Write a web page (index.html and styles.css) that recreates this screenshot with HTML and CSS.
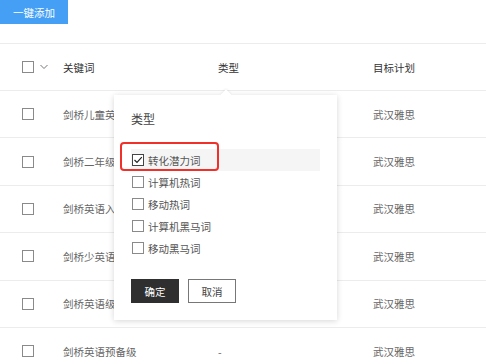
FILE: index.html
```html
<!DOCTYPE html>
<html lang="zh-CN">
<head>
  <meta charset="UTF-8" />
  <meta name="viewport" content="width=device-width, initial-scale=1.0"/>
  <title>关键词</title>
  <link rel="stylesheet" href="styles.css">
</head>
<body>

  <div class="toolbar">
    <button class="btn-add">一键添加</button>
  </div>

  <!-- Keyword table -->
  <div class="table">
    <div class="row head">
      <div class="cell check">
        <span class="box"></span>
        <svg class="caret" width="8" height="6" viewBox="0 0 8 6"><path d="M0.5 1 L4 4.5 L7.5 1" fill="none" stroke="#777" stroke-width="1"/></svg>
      </div>
      <div class="cell">关键词</div>
      <div class="cell">类型</div>
      <div class="cell">目标计划</div>
    </div>
    <div class="row">
      <div class="cell check"><span class="box"></span></div>
      <div class="cell">剑桥儿童英语</div>
      <div class="cell"></div>
      <div class="cell">武汉雅思</div>
    </div>
    <div class="row">
      <div class="cell check"><span class="box"></span></div>
      <div class="cell">剑桥二年级英语</div>
      <div class="cell"></div>
      <div class="cell">武汉雅思</div>
    </div>
    <div class="row">
      <div class="cell check"><span class="box"></span></div>
      <div class="cell">剑桥英语入门级</div>
      <div class="cell"></div>
      <div class="cell">武汉雅思</div>
    </div>
    <div class="row">
      <div class="cell check"><span class="box"></span></div>
      <div class="cell">剑桥少英语考级</div>
      <div class="cell"></div>
      <div class="cell">武汉雅思</div>
    </div>
    <div class="row">
      <div class="cell check"><span class="box"></span></div>
      <div class="cell">剑桥英语级别</div>
      <div class="cell"></div>
      <div class="cell">武汉雅思</div>
    </div>
    <div class="row">
      <div class="cell check"><span class="box"></span></div>
      <div class="cell">剑桥英语预备级</div>
      <div class="cell">-</div>
      <div class="cell">武汉雅思</div>
    </div>
  </div>

  <!-- Filter popover -->
  <div class="popover">
    <div class="popover-title">类型</div>
    <ul class="options">
      <li class="option active">
        <span class="box checked">
          <svg width="10" height="10" viewBox="0 0 10 10"><path d="M1.5 5 L4 7.5 L8.8 2.2" fill="none" stroke="#222" stroke-width="1.2"/></svg>
        </span>
        转化潜力词
      </li>
      <li class="option"><span class="box"></span>计算机热词</li>
      <li class="option"><span class="box"></span>移动热词</li>
      <li class="option"><span class="box"></span>计算机黑马词</li>
      <li class="option"><span class="box"></span>移动黑马词</li>
    </ul>
    <div class="actions">
      <button class="btn-ok">确定</button>
      <button class="btn-cancel">取消</button>
    </div>
  </div>

  <!-- annotation -->
  <div class="mark"></div>

</body>
</html>
```

FILE: styles.css
```css
* {
  box-sizing: border-box;
  margin: 0;
  padding: 0;
}

body {
  font-family: "Noto Sans CJK SC", "Noto Sans", sans-serif;
  font-size: 10.5px;
  color: #666;
  background: #fff;
  width: 486px;
  height: 364px;
  overflow: hidden;
  position: relative;
}

button {
  font-family: inherit;
  font-size: 10.5px;
  cursor: pointer;
}

.toolbar {
  height: 43px;
}

.btn-add {
  width: 68px;
  height: 24px;
  border: none;
  background: #449ff5;
  color: #fff;
}

/* Table */
.table {
  border-top: 1px solid #ececec;
}

.row {
  display: grid;
  grid-template-columns: 63px 155px 155px 1fr;
  align-items: center;
  height: 47.4px;
  border-bottom: 1px solid #ececec;
}

.row.head {
  height: 47px;
  color: #333;
}

.cell {
  white-space: nowrap;
  overflow: hidden;
}

.cell.check {
  display: flex;
  align-items: center;
  gap: 6px;
  padding-left: 22px;
}

.box {
  display: inline-flex;
  align-items: center;
  justify-content: center;
  width: 12px;
  height: 12px;
  border: 1px solid #8a8a8a;
  background: #fff;
  flex-shrink: 0;
}

.box.checked {
  border-color: #444;
}

.caret {
  display: block;
}

/* Popover */
.popover {
  position: absolute;
  left: 114px;
  top: 95px;
  width: 223px;
  padding: 16px 17px 17px 17px;
  background: #fff;
  box-shadow: 0 1px 6px rgba(0, 0, 0, 0.16);
  color: #555;
}

.popover::before {
  content: "";
  position: absolute;
  top: -4px;
  left: 108px;
  width: 8px;
  height: 8px;
  background: #fff;
  transform: rotate(45deg);
  box-shadow: -1px -1px 2px rgba(0, 0, 0, 0.06);
}

.popover-title {
  font-size: 12px;
  line-height: 16px;
  color: #444;
  margin-bottom: 22px;
}

.options {
  list-style: none;
}

.option {
  display: flex;
  align-items: center;
  gap: 4px;
  height: 22px;
  padding-left: 1px;
}

.option.active {
  background: #f5f5f5;
}

.actions {
  display: flex;
  gap: 9px;
  margin-top: 20px;
}

.btn-ok,
.btn-cancel {
  width: 48px;
  height: 24px;
}

.btn-ok {
  border: none;
  background: #2f2f2f;
  color: #fff;
}

.btn-cancel {
  border: 1px solid #777;
  background: #fff;
  color: #444;
}

/* Red highlight annotation */
.mark {
  position: absolute;
  left: 120px;
  top: 142px;
  width: 99px;
  height: 29px;
  border: 2px solid #f2302a;
  border-radius: 4px;
}
```
